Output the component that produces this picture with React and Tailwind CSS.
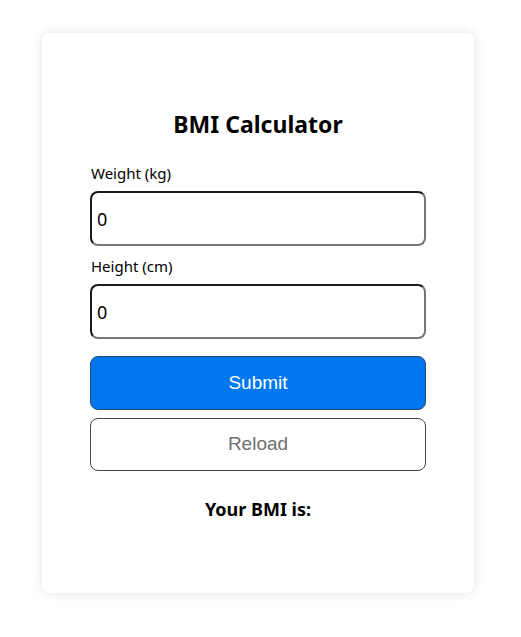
export default function App() {
  return (
    <div className="min-h-screen bg-white font-['Noto_Sans',sans-serif] text-black">
      <div className="ml-[42px] pt-[33px]">
        <div className="w-[432px] rounded-lg bg-white shadow-[0_0_12px_rgba(0,0,0,0.12)] px-[48px] pt-[76px] pb-[72px]">
          <h1 className="text-center text-[23px] leading-[30px] font-bold">BMI Calculator</h1>

          <label className="block mt-[24px] text-[15px] leading-[20px] ml-px">Weight (kg)</label>
          <input
            type="text"
            defaultValue="0"
            className="mt-[8px] block w-[336px] h-[55px] rounded-lg border-2 border-t-[#1a1a1a] border-l-[#1a1a1a] border-r-[#767676] border-b-[#767676] px-[5px] text-[18px] outline-none"
          />

          <label className="block mt-[10px] text-[15px] leading-[20px] ml-px">Height (cm)</label>
          <input
            type="text"
            defaultValue="0"
            className="mt-[8px] block w-[336px] h-[55px] rounded-lg border-2 border-t-[#1a1a1a] border-l-[#1a1a1a] border-r-[#767676] border-b-[#767676] px-[5px] text-[18px] outline-none"
          />

          <button className="mt-[17px] block w-[336px] h-[54px] rounded-lg border border-[#2a4a6a] bg-[#0077ee] font-['Liberation_Sans',Arial,sans-serif] text-[19px] text-white">
            Submit
          </button>
          <button className="mt-[8px] block w-[336px] h-[53px] rounded-lg border border-[#444] bg-white font-['Liberation_Sans',Arial,sans-serif] text-[19px] text-[#6f6f6f]">
            Reload
          </button>

          <p className="mt-[26px] text-center text-[18px] leading-[24px] font-bold">Your BMI is:</p>
        </div>
      </div>
    </div>
  );
}
